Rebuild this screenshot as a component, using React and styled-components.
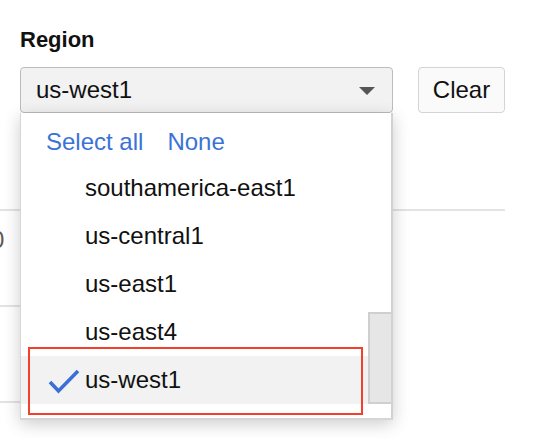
import React from "react";
import styled, { createGlobalStyle } from "styled-components";

const Global = createGlobalStyle`
  html, body { margin: 0; padding: 0; background: #fff; }
  body { font-family: "Liberation Sans", Arial, Helvetica, sans-serif; color: #111; overflow: hidden; }
  * { box-sizing: border-box; }
`;

const Page = styled.div`
  width: 543px;
  height: 439px;
  padding: 25px 0 0 20px;
  position: relative;
`;

const Label = styled.div`
  font-size: 22px;
  line-height: 30px;
  font-weight: 700;
  margin-bottom: 12px;
`;

const Controls = styled.div`
  display: flex;
  gap: 25px;
  align-items: flex-start;
`;

const SelectWrap = styled.div`
  position: relative;
  width: 373px;
`;

const SelectBox = styled.div`
  height: 46px;
  background: #f2f2f2;
  border: 1px solid #bcbcbc;
  border-radius: 4px;
  display: flex;
  align-items: center;
  justify-content: space-between;
  padding: 0 17px 0 15px;
  font-size: 24px;
`;

const Arrow = styled.span`
  width: 0;
  height: 0;
  border-left: 8px solid transparent;
  border-right: 8px solid transparent;
  border-top: 8px solid #555;
  margin-top: 1px;
`;

const Button = styled.button`
  height: 46px;
  width: 87px;
  background: #fafafa;
  border: 1px solid #d4d4d4;
  border-radius: 4px;
  font-family: inherit;
  font-size: 24px;
  color: #111;
  padding: 0;
`;

const Table = styled.div`
  margin-left: -20px;
`;

const TableRow = styled.div`
  height: ${(p) => p.$h}px;
  width: ${(p) => p.$w}px;
  border-bottom: 2px solid #e3e3e3;
  padding-top: ${(p) => p.$pt || 0}px;
`;

const Cell = styled.div`
  font-size: 24px;
  line-height: 28px;
  color: #5a5a5a;
  margin-left: -9px;
`;

const Panel = styled.div`
  position: absolute;
  top: 46px;
  left: 0;
  width: 373px;
  height: 307px;
  background: #fff;
  border-left: 1px solid #d6d6d6;
  border-right: 2px solid #d2d2d2;
  border-bottom: 2px solid #d6d6d6;
  box-shadow: 0 4px 16px rgba(0, 0, 0, 0.2);
  display: flex;
  flex-direction: column;
  z-index: 2;
`;

const Header = styled.div`
  height: 51px;
  display: flex;
  gap: 24px;
  align-items: center;
  padding: 6px 0 0 25px;
`;

const Link = styled.span`
  color: #3a73d8;
  font-size: 24px;
`;

const ListArea = styled.div`
  display: flex;
`;

const Rows = styled.div`
  flex: 1;
`;

const Row = styled.div`
  height: 48px;
  display: flex;
  align-items: center;
  font-size: 24px;
  background: ${(p) => (p.$active ? "#f2f2f2" : "transparent")};
`;

const IconSlot = styled.span`
  width: 64px;
  padding-left: 27px;
  display: flex;
  align-items: center;
  padding-top: 2px;
`;

const Track = styled.div`
  width: 23px;
  display: flex;
  flex-direction: column;
  justify-content: flex-end;
`;

const Thumb = styled.div`
  height: 92px;
  background: #e6e6e6;
  border: 2px solid #cfcfcf;
  border-right: none;
`;

const Highlight = styled.div`
  position: absolute;
  left: 28px;
  top: 347px;
  width: 335px;
  height: 68px;
  border: 2px solid #f2402a;
  z-index: 3;
  pointer-events: none;
`;

const Check = () => (
  <svg width="32" height="26" viewBox="0 0 32 26">
    <polyline
      points="2,14 10.5,23 30,3"
      fill="none"
      stroke="#3a6fd8"
      strokeWidth="3.6"
      strokeLinecap="butt"
      strokeLinejoin="miter"
    />
  </svg>
);

const options = [
  "southamerica-east1",
  "us-central1",
  "us-east1",
  "us-east4",
  "us-west1",
];

export default function App() {
  return (
    <Page>
      <Global />
      <Label>Region</Label>
      <Controls>
        <SelectWrap>
          <SelectBox>
            <span>us-west1</span>
            <Arrow />
          </SelectBox>
          <Panel>
            <Header>
              <Link>Select all</Link>
              <Link>None</Link>
            </Header>
            <ListArea>
              <Rows>
                {options.map((o) => (
                  <Row key={o} $active={o === "us-west1"}>
                    <IconSlot>{o === "us-west1" && <Check />}</IconSlot>
                    {o}
                  </Row>
                ))}
              </Rows>
              <Track>
                <Thumb />
              </Track>
            </ListArea>
          </Panel>
        </SelectWrap>
        <Button>Clear</Button>
      </Controls>
      <Table>
        <TableRow $h={98} $w={505} />
        <TableRow $h={96} $w={300} $pt={15}>
          <Cell>0</Cell>
        </TableRow>
        <TableRow $h={96} $w={300} />
      </Table>
      <Highlight />
    </Page>
  );
}
